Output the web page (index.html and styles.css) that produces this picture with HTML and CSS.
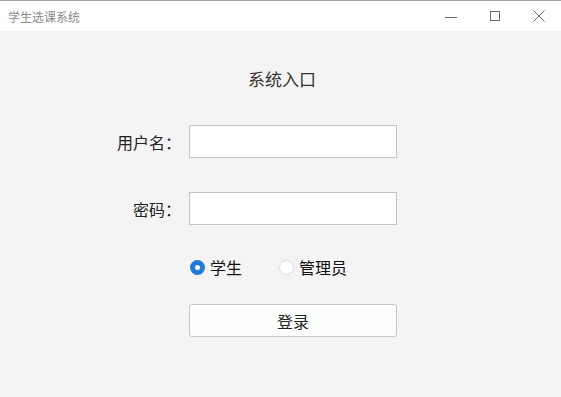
FILE: index.html
```html
<!DOCTYPE html>
<html lang="zh-CN">
<head>
<meta charset="utf-8">
<title>学生选课系统</title>
<link rel="stylesheet" href="styles.css">
</head>
<body>
<div class="window">
  <header class="titlebar">
    <span class="app-title">学生选课系统</span>
    <div class="controls">
      <span class="ctl ctl-min"><svg width="14" height="14" viewBox="0 0 14 14"><path d="M1 7.5H13" stroke="#6a6a6a" stroke-width="1"/></svg></span>
      <span class="ctl ctl-max"><svg width="14" height="14" viewBox="0 0 14 14"><rect x="2.5" y="2.5" width="9" height="9" fill="none" stroke="#6a6a6a" stroke-width="1"/></svg></span>
      <span class="ctl ctl-close"><svg width="14" height="14" viewBox="0 0 14 14"><path d="M1.5 1.5L12.5 12.5M12.5 1.5L1.5 12.5" stroke="#6a6a6a" stroke-width="1"/></svg></span>
    </div>
  </header>
  <main class="content">
    <h1 class="heading">系统入口</h1>
    <div class="row row-user">
      <label class="label">用户名：</label>
      <div class="field"></div>
    </div>
    <div class="row row-pass">
      <label class="label">密码：</label>
      <div class="field"></div>
    </div>
    <div class="roles">
      <span class="role"><span class="radio radio-on"></span><span class="role-text">学生</span></span>
      <span class="role"><span class="radio"></span><span class="role-text">管理员</span></span>
    </div>
    <div class="actions">
      <div class="btn">登录</div>
    </div>
  </main>
</div>
</body>
</html>
```
FILE: styles.css
```css
* { box-sizing: border-box; }
html, body {
  margin: 0;
  padding: 0;
  background: #f4f4f4;
  font-family: "Noto Sans CJK SC", "Noto Sans", sans-serif;
}
.window {
  width: 561px;
  height: 397px;
  overflow: hidden;
  background: #f4f4f4;
}
.titlebar {
  height: 31px;
  border-top: 1px solid #a3a3a3;
  background: #ffffff;
  display: flex;
  align-items: center;
  justify-content: space-between;
}
.app-title {
  margin-left: 8px;
  font-size: 12px;
  line-height: 14px;
  color: #8a8a8a;
  margin-top: 1px;
}
.controls {
  display: flex;
  align-items: center;
  height: 30px;
}
.ctl {
  display: flex;
  width: 14px;
  height: 14px;
}
.ctl-min { margin-right: 30px; }
.ctl-max { margin-right: 30px; }
.ctl-close { margin-right: 15px; }
.ctl-min svg { transform: translate(0px, 1px); }
.content {
  padding-top: 36px;
  display: flex;
  flex-direction: column;
}
.heading {
  margin: 0 0 0 247px;
  width: 70px;
  font-size: 17px;
  font-weight: normal;
  line-height: 24px;
  color: #333;
  text-align: center;
}
.row {
  display: flex;
  align-items: center;
  height: 33px;
}
.row-user { margin-top: 34px; }
.row-pass { margin-top: 34px; }
.label {
  width: 181px;
  text-align: right;
  margin-right: 8px;
  font-size: 16px;
  color: #222;
  line-height: 20px;
}
.field {
  width: 208px;
  height: 33px;
  background: #fff;
  border: 1px solid #c4c4c4;
}
.roles {
  margin-top: 30px;
  margin-left: 190px;
  display: flex;
  align-items: center;
  height: 24px;
  gap: 37px;
}
.role {
  display: flex;
  align-items: center;
  gap: 5px;
}
.role-text {
  font-size: 16px;
  color: #111;
  line-height: 20px;
}
.radio {
  width: 15px;
  height: 15px;
  border-radius: 50%;
  background: #fff;
  border: 1px solid #dcdcdc;
  display: inline-block;
}
.radio-on {
  border: 5px solid #1f7ad9;
  background: #fff;
}
.actions {
  margin-top: 25px;
  margin-left: 189px;
}
.btn {
  width: 208px;
  height: 33px;
  background: #fcfdfd;
  border: 1px solid #c6c6c6;
  border-radius: 3px;
  display: flex;
  align-items: center;
  justify-content: center;
  font-size: 16px;
  color: #222;
}
```
